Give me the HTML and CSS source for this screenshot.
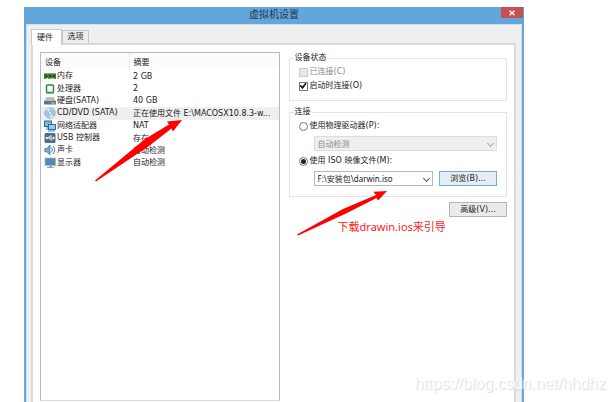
FILE: index.html
```html
<!DOCTYPE html>
<html>
<head>
<meta charset="utf-8">
<title>虚拟机设置</title>
<link rel="stylesheet" href="styles.css">
</head>
<body>
<main class="window">
  <header class="titlebar">
    <h1>虚拟机设置</h1>
    <button class="close" type="button" aria-label="关闭"><svg width="6" height="6" viewBox="0 0 6 6"><path d="M.6.8l4.800 4.400M5.400.8L.6 5.200" stroke="#fff" stroke-width="1.300"/></svg></button>
  </header>
  <div class="client">
    <nav class="tabs">
      <button class="tab active" type="button">硬件</button>
      <button class="tab" type="button">选项</button>
    </nav>
    <div class="panel">
      <section class="devices">
        <table>
          <thead><tr><th>设备</th><th>摘要</th></tr></thead>
          <tbody>
            <tr><td><svg class="icon" viewBox="0 0 12 12"><path fill="#3f7a3f" d="M0 3h12v6h-1V8H1v1H0z"/><path fill="#78b56b" d="M0 3h12v1H0zM1 8h2v1H1zM4 8h4v1H4zM9 8h2v1H9z"/><path fill="#1d4a24" d="M1 5h2v2H1zM5 5h2v2H5zM9 5h2v2H9z"/></svg>内存</td><td>2 GB</td></tr>
            <tr><td><svg class="icon" viewBox="0 0 12 12"><rect x="2.500" y="2" width="7" height="7.500" rx="1" fill="#f5fff5" stroke="#2f8b45" stroke-width="1.500"/><path stroke="#8cbf92" d="M2 10.500h8"/></svg>处理器</td><td>2</td></tr>
            <tr><td><svg class="icon" viewBox="0 0 12 12"><path fill="#b4bec5" d="M2.500 2h7L12 6.500H0z"/><path fill="#64747e" d="M0 6h12v3.500H0z"/><path stroke="#a7d2e7" d="M7 8h4"/></svg>硬盘(SATA)</td><td>40 GB</td></tr>
            <tr class="selected"><td><svg class="icon" viewBox="0 0 12 12"><circle cx="6" cy="6" r="5.300" fill="#a3c6e4" stroke="#7ea9cc" stroke-width=".7"/><path fill="#d3e6f5" d="M6 6L2 2.500A5 5 0 0 1 6 1zM6 6l4 3.500A5 5 0 0 1 6 11z"/><circle cx="6" cy="6" r="1.500" fill="#fff" stroke="#82a8c6" stroke-width=".7"/></svg>CD/DVD (SATA)</td><td>正在使用文件 E:\MACOSX10.8.3-w...</td></tr>
            <tr><td><svg class="icon" viewBox="0 0 12 12"><rect x=".5" y="1" width="7" height="5.500" fill="#77b9e5" stroke="#326c9b"/><rect x="4.500" y="4.500" width="7" height="5" fill="#91cbed" stroke="#326c9b"/><path stroke="#4b7b9c" d="M3 7v3M4 11h7"/></svg>网络适配器</td><td>NAT</td></tr>
            <tr><td><svg class="icon" viewBox="0 0 12 12"><rect x=".5" y="1" width="11" height="10" rx="1.500" fill="#4d6f8b"/><path fill="none" stroke="#fff" stroke-width=".9" d="M2 6h8M4 6l2-2h2M5 6l2 2h1.500"/><circle cx="2.700" cy="6" r="1.100" fill="#fff"/><path fill="#fff" d="M9 4.500L11 6 9 7.500z"/></svg>USB 控制器</td><td>存在</td></tr>
            <tr><td><svg class="icon" viewBox="0 0 12 12"><path fill="#75a9ce" stroke="#386f9b" stroke-width=".7" d="M.8 4.500h2L6 1v10L2.800 7.800h-2z"/><path fill="none" stroke="#4589bb" d="M7.500 3.500q2 2.500 0 5M9 2q3.500 4 0 8"/></svg>声卡</td><td>自动检测</td></tr>
            <tr><td><svg class="icon" viewBox="0 0 12 12"><rect x="1" y="1" width="10.500" height="7.500" fill="#5688b2" stroke="#a5b7c5" stroke-width=".8"/><path fill="#8fa7b7" d="M5 9h3v1h2v1H3v-1h2z"/></svg>显示器</td><td>自动检测</td></tr>
          </tbody>
        </table>
        <svg class="arrow arrow-device" viewBox="0 0 88 62"><path fill="#f00" d="M0 60.500L50 19 74 4.500 72 1.500 87 0 78 11.500 76.500 8.500 54 26 1 61.500z"/></svg>
      </section>
      <section class="settings">
        <fieldset class="status">
          <legend>设备状态</legend>
          <label class="option disabled"><input type="checkbox" disabled>已连接(C)</label>
          <label class="option"><input type="checkbox" checked>启动时连接(O)</label>
        </fieldset>
        <fieldset class="connection">
          <legend>连接</legend>
          <label class="option"><input type="radio" name="source">使用物理驱动器(P):</label>
          <div class="source-row"><span class="combo"><select aria-label="物理驱动器" disabled><option>自动检测</option></select></span></div>
          <label class="option"><input type="radio" name="source" checked>使用 ISO 映像文件(M):</label>
          <div class="source-row"><span class="combo"><select aria-label="ISO 映像文件"><option>F:\安装包\darwin.iso</option></select></span><button class="push focused" type="button">浏览(B)...</button></div>
        </fieldset>
        <button class="push advanced" type="button">高级(V)...</button>
        <svg class="arrow arrow-iso" viewBox="0 0 91 45"><path fill="#f00" d="M0 43.500L46 18 79 4 76.500.8 90 0 81 9.500 79.500 7 49 22.500 1 44.500z"/></svg>
        <p class="note">下载drawin.ios来引导</p>
      </section>
    </div>
  </div>
</main>
<p class="watermark">https://blog.csdn.net/hhdhz</p>
</body>
</html>
```
FILE: styles.css
```css
* { box-sizing: border-box; }
body {
  margin: 0;
  height: 100vh;
  padding: 7px 91px 0 24px;
  overflow: hidden;
  position: relative;
  background: #fff;
  color: #222;
  font: 8px/12px "DejaVu Sans", "Noto Sans CJK SC", sans-serif;
}
button, input, select { font: inherit; color: inherit; margin: 0; }
.window {
  height: 100%;
  display: flex;
  flex-direction: column;
  background: #62a6dc;
  border: solid #62a6dc;
  border-width: 0 2px;
}
.titlebar { height: 17px; position: relative; text-align: center; }
h1 { margin: 0; font-size: 10px; line-height: 15px; font-weight: 400; color: #20384d; }
.close {
  position: absolute;
  top: 0;
  right: -1px;
  width: 22px;
  height: 11px;
  padding: 0;
  border: 0;
  background: #c75050;
  display: grid;
  place-items: center;
}
.client {
  flex: 1;
  display: flex;
  flex-direction: column;
  padding: 5px 5px 0 4px;
  background: #efefef;
  border: solid #d5dce3;
  border-width: 1px 1px 0;
}
.tabs { display: flex; align-items: flex-end; height: 13px; }
.tab {
  width: 27px;
  height: 13px;
  padding: 0;
  border: 1px solid #c9c9c9;
  border-bottom: 0;
  background: #ededed;
  line-height: 12px;
}
.tab.active { width: 31px; height: 16px; background: #fff; margin-bottom: -2px; z-index: 1; padding-right: 3px; }
.panel {
  flex: 1;
  display: flex;
  gap: 9px;
  padding: 7px 7px 0;
  background: #fff;
  border: 2px solid #dadada;
  border-bottom: 0;
}
.devices {
  position: relative;
  flex: 0 0 51.3%;
  margin-bottom: 1px;
  border: 1px solid #b4bbc5;
  border-bottom-color: #d8d8d8;
}
table { width: 100%; height: 116px; table-layout: fixed; border-collapse: collapse; }
th, td { padding: 0; text-align: left; font-weight: 400; white-space: nowrap; line-height: 11px; }
th { height: 17px; padding: 2px 4px 0; background: #fcfcfd; }
th:first-child { width: 88px; border-right: 1px solid #e5eaf2; }
td:first-child { padding-left: 3px; }
td:last-child { padding-left: 4px; }
.selected { background: #efefef; }
.icon { width: 12px; height: 12px; display: block; float: left; margin-right: 1px; }
.settings { position: relative; flex: 1; min-width: 0; display: flex; flex-direction: column; padding-bottom: 8px; }
fieldset { min-width: 0; margin: 0; border: 1px solid #e4e4e4; padding: 1px 9px 0; }
legend { padding: 0 1px; margin-left: -5px; line-height: 12px; }
.status { height: 49px; }
.connection { height: 91px; margin-top: 5px; }
.option { display: flex; align-items: center; gap: 2px; height: 14px; }
.disabled { color: #888; }
input { appearance: none; width: 9px; height: 9px; border: 1px solid #777; background: #fff; display: grid; place-items: center; }
input[type="radio"] { border-radius: 50%; }
input[type="radio"]:checked::before { content: ""; width: 5px; height: 5px; border-radius: 50%; background: #222; }
input[type="checkbox"]:checked::before {
  content: "";
  width: 7px;
  height: 7px;
  background: #111;
  clip-path: polygon(0 45%, 18% 32%, 40% 58%, 82% 5%, 100% 18%, 42% 95%);
}
input:disabled { border-color: #ccc; background: #e8e8e8; }
.source-row { display: flex; gap: 6px; margin: 3px 0 3px 15px; height: 15px; }
.combo { position: relative; flex: 1; display: flex; font-family: "Noto Sans", "Noto Sans CJK SC", sans-serif; }
.combo::after {
  content: "";
  position: absolute;
  right: 4px;
  top: 5px;
  width: 4px;
  height: 4px;
  border: solid #555;
  border-width: 0 1px 1px 0;
  transform: rotate(45deg);
}
.combo:has(:disabled)::after { border-color: #aaa; }
select { appearance: none; width: 100%; padding: 0 3px; border: 1px solid #b8b8b8; border-radius: 0; background: #fff; }
select:disabled { background: #efefef; border-color: #ddd; color: #888; opacity: 1; }
.push { width: 58px; height: 15px; padding: 0; border: 1px solid #b5b5b5; background: #ebebeb; line-height: 12px; }
.focused { border-color: #6faee5; background: #e6edf4; }
.advanced { align-self: flex-end; margin-top: 5px; }
.arrow { position: absolute; pointer-events: none; }
.arrow-device { left: 54px; top: 67px; width: 88px; height: 62px; }
.arrow-iso { left: 8px; top: 139px; width: 91px; height: 45px; }
.note { margin: 2px 0 0 49px; font: 11px/16px "Noto Sans", "Noto Sans CJK SC", sans-serif; color: #f22; }
.watermark {
  position: absolute;
  right: 9px;
  bottom: 9px;
  margin: 0;
  font: 16px/18px "Liberation Sans", sans-serif;
  color: #fffc;
  text-shadow: 1px 1px 1px #dcdcdc;
}
```
